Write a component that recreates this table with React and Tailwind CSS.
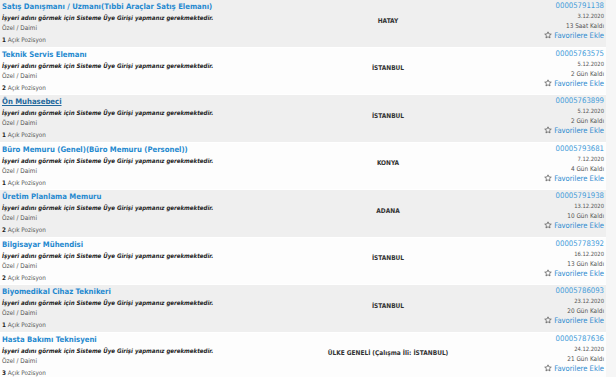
import React from "react";

const rows = [
  { t: "Satış Danışmanı / Uzmanı(Tıbbi Araçlar Satış Elemanı)", n: 1, city: "HATAY", id: "00005791138", d: "3.12.2020", k: "13 Saat Kaldı" },
  { t: "Teknik Servis Elemanı", n: 2, city: "İSTANBUL", id: "00005763575", d: "5.12.2020", k: "2 Gün Kaldı" },
  { t: "Ön Muhasebeci", n: 1, city: "İSTANBUL", id: "00005763899", d: "5.12.2020", k: "2 Gün Kaldı", hover: true },
  { t: "Büro Memuru (Genel)(Büro Memuru (Personel))", n: 1, city: "KONYA", id: "00005793681", d: "7.12.2020", k: "4 Gün Kaldı" },
  { t: "Üretim Planlama Memuru", n: 2, city: "ADANA", id: "00005791938", d: "13.12.2020", k: "10 Gün Kaldı" },
  { t: "Bilgisayar Mühendisi", n: 2, city: "İSTANBUL", id: "00005778392", d: "16.12.2020", k: "13 Gün Kaldı" },
  { t: "Biyomedikal Cihaz Teknikeri", n: 1, city: "İSTANBUL", id: "00005786093", d: "23.12.2020", k: "20 Gün Kaldı" },
  { t: "Hasta Bakımı Teknisyeni", n: 3, city: "ÜLKE GENELİ (Çalışma İli: İSTANBUL)", id: "00005787636", d: "24.12.2020", k: "21 Gün Kaldı" },
];

function Star() {
  return (
    <svg width="8" height="8" viewBox="0 0 24 24" className="inline-block mr-[2px] -mt-[1px]" fill="none" stroke="#555" strokeWidth="2.2" strokeLinejoin="round">
      <path d="M12 2.5l2.9 6.3 6.9.7-5.2 4.6 1.5 6.8L12 17.4l-6.1 3.5 1.5-6.8-5.2-4.6 6.9-.7z" />
    </svg>
  );
}

export default function App() {
  return (
    <div className="w-[616px] h-[377px] overflow-hidden bg-[#f6f6f6]" style={{ fontFamily: '"DejaVu Sans Condensed", "DejaVu Sans", sans-serif' }}>
      <div className="w-[606px] bg-white">
        {rows.map((r, i) => (
          <div key={i} className={`flex h-[46.5px] mb-[1px] ${i % 2 === 0 ? "bg-[#efefef]" : "bg-[#fdfdfd]"}`}>
            <div className="w-[288px] pl-[2px] pt-[1px] text-[6.3px] text-[#333]">
              <div className={`h-[11px] leading-[11px] font-bold text-[7.7px] whitespace-nowrap ${r.hover ? "text-[#22689c] underline" : "text-[#1f89cf]"}`}>{r.t}</div>
              <div className="h-[11px] leading-[11px] font-bold italic text-[6.1px] text-[#222] whitespace-nowrap">İşyeri adını görmek için Sisteme Üye Girişi yapmanız gerekmektedir.</div>
              <div className="h-[11px] leading-[11px] text-[6.4px] text-[#555]">Özel / Daimi</div>
              <div className="h-[11px] leading-[11px] text-[#555]"><span className="font-bold text-[#222]">{r.n}</span> Açık Pozisyon</div>
            </div>
            <div className="w-[200px] flex items-center justify-center pb-[3px] font-bold text-[6.5px] text-[#333] whitespace-nowrap">{r.city}</div>
            <div className="flex-1 pr-[2px] pt-[1px] text-right text-[6.4px] text-[#555]">
              <div className="h-[10px] leading-[10px] text-[7.7px] text-[#449cda]">{r.id}</div>
              <div className="h-[10px] leading-[10px] text-[5.8px]">{r.d}</div>
              <div className="h-[10px] leading-[10px]">{r.k}</div>
              <div className="h-[10px] leading-[10px] text-[7.6px] text-[#2d8ad0] whitespace-nowrap"><Star />Favorilere Ekle</div>
            </div>
          </div>
        ))}
      </div>
    </div>
  );
}
